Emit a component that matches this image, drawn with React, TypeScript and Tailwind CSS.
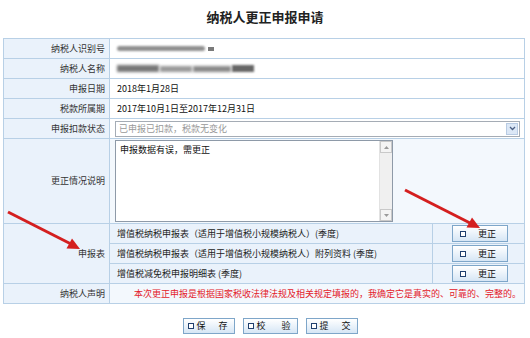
import React from 'react';

const font = { fontFamily: '"Noto Sans CJK SC", "Noto Sans", sans-serif' };

const reports = [
  '增值税纳税申报表（适用于增值税小规模纳税人）(季度)',
  '增值税纳税申报表（适用于增值税小规模纳税人）附列资料 (季度)',
  '增值税减免税申报明细表 (季度)',
];

function SquareIcon() {
  return <span className="inline-block h-[6px] w-[6px] border border-[#1f3f6e] bg-white" />;
}

function FixButton() {
  return (
    <div className="flex h-[17px] w-[56px] items-center gap-[12px] border border-[#7ea6c9] bg-gradient-to-b from-white to-[#d6e6f5] pl-[7px] text-[9px] text-[#111]">
      <SquareIcon />
      <span>更正</span>
    </div>
  );
}

function ActionButton({ a, b, width }: { a: string; b: string; width: string }) {
  return (
    <div
      className={`flex h-[16px] ${width} items-center border border-[#7ea6c9] bg-gradient-to-b from-white to-[#d6e6f5] pl-[4px] pr-[6px] text-[9px] text-[#111]`}
    >
      <SquareIcon />
      <span className="ml-[3px]">{a}</span>
      <span className="ml-auto">{b}</span>
    </div>
  );
}

function Label({ children, rowSpan }: { children: React.ReactNode; rowSpan?: number }) {
  return (
    <td
      rowSpan={rowSpan}
      className="border border-[#b8d0e6] bg-[#eaf2fb] pr-[4px] text-right align-middle text-[9px] text-[#333]"
    >
      {children}
    </td>
  );
}

export default function App() {
  return (
    <div className="relative h-[338px] w-[530px] overflow-hidden bg-white" style={font}>
      <div className="pt-[9px] text-center text-[13px] font-bold leading-[16px] text-[#222]">
        纳税人更正申报申请
      </div>

      <table className="ml-[3px] mt-[13px] w-[521px] table-fixed border-collapse">
        <colgroup>
          <col className="w-[106px]" />
          <col className="w-[323px]" />
          <col className="w-[92px]" />
        </colgroup>
        <tbody>
          <tr className="h-[20px]">
            <Label>纳税人识别号</Label>
            <td colSpan={2} className="border border-[#b8d0e6] pl-[7px]">
              <div className="flex items-center gap-[3px]">
                <div className="h-[5px] w-[88px] rounded-full bg-[#8f8f8f] blur-[1px]" />
                <div className="h-[4px] w-[6px] bg-[#7a7a7a] blur-[0.5px]" />
              </div>
            </td>
          </tr>
          <tr className="h-[20px]">
            <Label>纳税人名称</Label>
            <td colSpan={2} className="border border-[#b8d0e6] pl-[7px]">
              <div className="flex items-center gap-[1px]">
                <div className="h-[7px] w-[42px] bg-[#777] blur-[1.5px]" />
                <div className="h-[6px] w-[32px] bg-[#999] blur-[1.5px]" />
                <div className="h-[6px] w-[38px] bg-[#888] blur-[1.5px]" />
                <div className="h-[7px] w-[22px] bg-[#666] blur-[1px]" />
              </div>
            </td>
          </tr>
          <tr className="h-[20px]">
            <Label>申报日期</Label>
            <td colSpan={2} className="border border-[#b8d0e6] pl-[7px] text-[9px] text-[#111]">
              2018年1月28日
            </td>
          </tr>
          <tr className="h-[20px]">
            <Label>税款所属期</Label>
            <td colSpan={2} className="border border-[#b8d0e6] pl-[7px] text-[9px] text-[#111]">
              2017年10月1日至2017年12月31日
            </td>
          </tr>
          <tr className="h-[20px]">
            <Label>申报扣款状态</Label>
            <td colSpan={2} className="border border-[#b8d0e6] pl-[5px] pr-[4px]">
              <div className="flex h-[16px] items-center border border-[#a5acb5] bg-white pl-[3px] pr-[1px] text-[9px] text-[#999]">
                <span>已申报已扣款，税款无变化</span>
                <div className="ml-auto flex h-[12px] w-[12px] items-center justify-center border border-[#b8cbe3] bg-[#dbe7f6]">
                  <svg width="7" height="5" viewBox="0 0 7 5">
                    <path d="M1 1l2.5 2.5L6 1" fill="none" stroke="#4d6185" strokeWidth="1.3" />
                  </svg>
                </div>
              </div>
            </td>
          </tr>
          <tr className="h-[85px]">
            <Label>更正情况说明</Label>
            <td colSpan={2} className="border border-[#b8d0e6] bg-[#f3f8fd] pl-[5px] align-middle">
              <div className="flex h-[82px] w-[278px] border border-[#8e9aa8] bg-white">
                <div className="flex-1 pl-[4px] pt-[2px] text-[9px] text-[#111]">申报数据有误，需更正</div>
                <div className="flex w-[13px] flex-col justify-between border-l border-[#e2e2e2] bg-[#f0f0f0]">
                  <div className="flex h-[12px] items-center justify-center border border-[#c9c9c9] bg-[#f4f4f4]">
                    <svg width="5" height="3" viewBox="0 0 5 3">
                      <path d="M0 3L2.5 0L5 3Z" fill="#9a9a9a" />
                    </svg>
                  </div>
                  <div className="flex h-[12px] items-center justify-center border border-[#c9c9c9] bg-[#f4f4f4]">
                    <svg width="5" height="3" viewBox="0 0 5 3">
                      <path d="M0 0L2.5 3L5 0Z" fill="#9a9a9a" />
                    </svg>
                  </div>
                </div>
              </div>
            </td>
          </tr>
          {reports.map((name, i) => (
            <tr key={name} className="h-[20px]">
              {i === 0 && <Label rowSpan={3}>申报表</Label>}
              <td className="border border-[#b8d0e6] bg-[#eaf2fb] pl-[7px] text-[9px] text-[#222]">{name}</td>
              <td className="border border-[#b8d0e6] bg-[#eaf2fb] pl-[19px]">
                <FixButton />
              </td>
            </tr>
          ))}
          <tr className="h-[20px]">
            <Label>纳税人声明</Label>
            <td colSpan={2} className="border border-[#b8d0e6] bg-[#f3f8fd] pl-[24px] text-[9px] text-[#e3202a]">
              本次更正申报是根据国家税收法律法规及相关规定填报的，我确定它是真实的、可靠的、完整的。
            </td>
          </tr>
        </tbody>
      </table>

      <div className="mt-[14px] flex justify-center gap-[8px] pl-[10px]">
        <ActionButton a="保" b="存" width="w-[52px]" />
        <ActionButton a="校" b="验" width="w-[55px]" />
        <ActionButton a="提" b="交" width="w-[52px]" />
      </div>

      <svg className="pointer-events-none absolute left-0 top-0" width="530" height="338" viewBox="0 0 530 338">
        <line x1="8" y1="212" x2="71" y2="244" stroke="#d41f1f" strokeWidth="3" />
        <polygon points="80,249 72,238.5 66.5,248.5" fill="#d41f1f" />
        <line x1="405" y1="190" x2="470" y2="223" stroke="#d41f1f" strokeWidth="3" />
        <polygon points="480,228 472,217.5 466.5,227.5" fill="#d41f1f" />
      </svg>
    </div>
  );
}
